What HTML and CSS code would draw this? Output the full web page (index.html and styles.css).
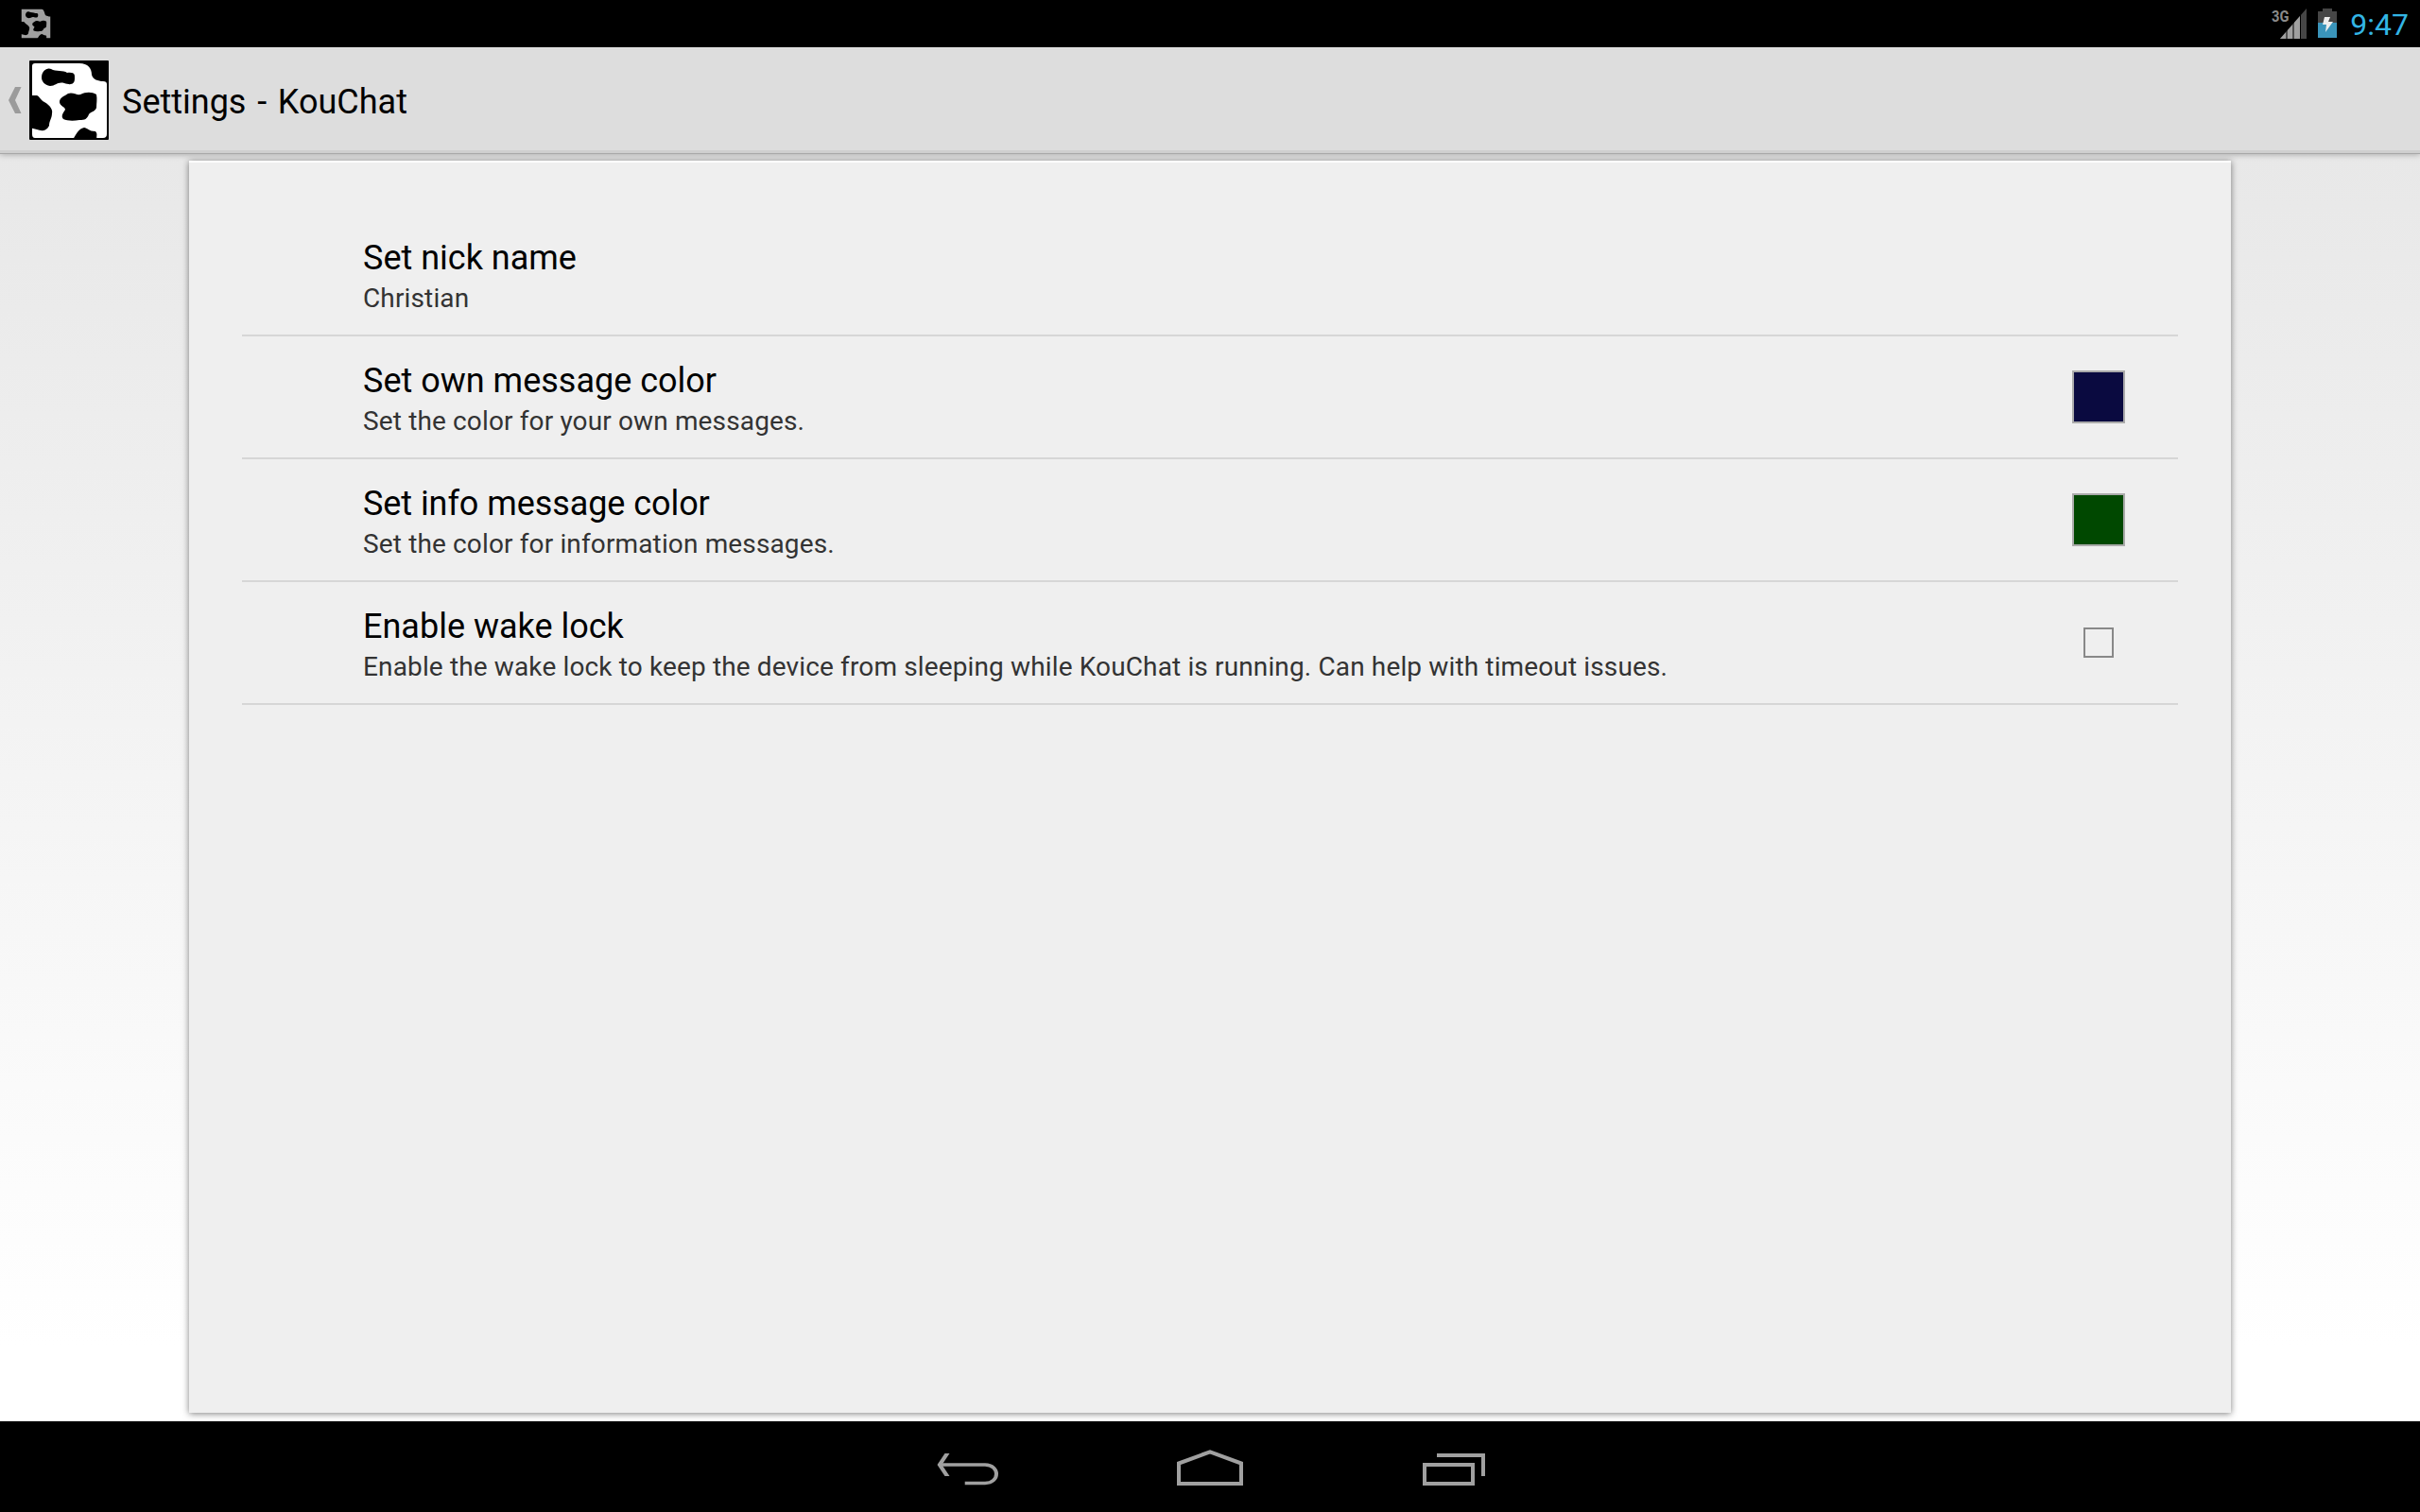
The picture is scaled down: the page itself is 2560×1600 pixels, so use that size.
FILE: index.html
```html
<!DOCTYPE html>
<html lang="en">
<head>
<meta charset="utf-8">
<title>Settings - KouChat</title>
<link rel="stylesheet" href="styles.css">
</head>
<body>
<div class="screen">
  <header class="status">
    <svg class="notice" viewBox="0 0 84 84"><rect x="2" y="2" width="80" height="80" fill="#a0a0a0"/><g fill="#000"><use href="#spots"/><path d="M58 0H84V22H78C68 21 67 17 66 12Q65 5 58 0Z"/></g></svg>
    <div class="tray">
      <span class="net">3G</span>
      <svg class="signal" width="30" height="34" viewBox="0 0 30 34"><path d="M0 32L28 0V32Z" fill="#464646"/><path d="M0 32L21 8V32Z" fill="#a0a0a0"/><path d="M7 22V34M14 14V34M21.5 6V34" stroke="#000"/></svg>
      <svg class="battery" width="20" height="32" viewBox="0 0 20 32"><path d="M0 3H5V0H15V3H20V31H0Z" fill="#464646"/><path d="M0 15H20V31H0Z" fill="#3a94ba"/><path d="M7 9H13L11 14H16L8 25L9 17H5Z" fill="#eee"/></svg>
      <span class="clock">9:47</span>
    </div>
  </header>
  <div class="bar">
    <svg class="up" width="14" height="28" viewBox="0 0 14 28"><path d="M7 0H13.5L7 14L13.5 28H7L0 14Z" fill="#9b9b9b"/></svg>
    <svg class="logo" width="84" height="84" viewBox="0 0 84 84">
      <rect width="84" height="84" rx="1"/>
      <path fill="#fff" d="M6 3H53C62 3 66 8 66 15C67 20 73 22 78 22Q82 22 82 25V78Q82 82 78 82H6Q3 82 3 78V6Q3 3 6 3Z"/>
      <g id="spots">
        <path d="M13 18C13 11 19 7 23 9C28 12 36 10 40 13C49 12 48 16 48 19C48 26 43 26 37 24C30 22 28 27 22 27C16 26 13 22 13 18Z"/>
        <path d="M0 37H8C11 38 12 42 16 44C23 48 25 53 24 56C24 61 21 64 21 69C18 75 13 75 8 73L0 71Z"/>
        <path d="M32 44C32 39 37 38 41 35C46 33 50 37 54 36C60 33 66 33 71 36C72 41 71 45 71 50C70 54 65 54 63 57C61 62 59 63 53 63C47 64 40 64 36 62C33 59 36 55 38 52C38 49 32 48 32 44Z"/>
        <path d="M46 84C49 79 52 72 58 71C61 71 63 75 70 75C73 78 70 81 72 84Z"/>
      </g>
    </svg>
    <h1 class="title">Settings - KouChat</h1>
  </div>
  <main class="content">
    <ul class="card">
      <li class="row"><div class="label"><h2 class="name">Set nick name</h2><p class="note">Christian</p></div></li>
      <li class="row"><div class="label"><h2 class="name">Set own message color</h2><p class="note">Set the color for your own messages.</p></div><span class="swatch navy"></span></li>
      <li class="row"><div class="label"><h2 class="name snug">Set info message color</h2><p class="note">Set the color for information messages.</p></div><span class="swatch green"></span></li>
      <li class="row"><div class="label"><h2 class="name">Enable wake lock</h2><p class="note">Enable the wake lock to keep the device from sleeping while KouChat is running. Can help with timeout issues.</p></div><span class="check"></span></li>
    </ul>
  </main>
  <nav class="nav">
    <svg viewBox="0 0 96 96"><path d="M30.5 34H25.5L17.5 46L25.5 58H30.5L22.5 46Z" fill="#a0a0a0" stroke="none"/><path d="M20 46H68C84 46 84 69.5 68 69.5H46.7" transform="matrix(1 0 0 .83 0 7.8)"/></svg>
    <svg viewBox="0 0 96 96"><path d="M15 66V44.5L48 32.3L81 44.5V66Z"/></svg>
    <svg viewBox="0 0 96 96"><path d="M17 46H68V66H17ZM30 36H79V58"/></svg>
  </nav>
</div>
</body>
</html>
```

FILE: styles.css
```css
* { box-sizing: border-box; margin: 0; padding: 0; }
body { font-family: Roboto, sans-serif; background: #000; }
.screen { width: 2560px; height: 1600px; display: flex; flex-direction: column; overflow: hidden; }
.status { height: 50px; background: #000; display: flex; justify-content: space-between; padding-left: 22px; }
.notice { width: 32px; height: 32px; margin-top: 9px; }
.tray { display: flex; align-items: flex-start; padding-right: 12px; }
.net { font: bold 17px/16px Roboto, sans-serif; color: #8a8a8a; margin-top: 9px; width: 9px; transform: scaleX(.86); transform-origin: 0 0; }
.signal { margin-top: 9px; }
.battery { margin: 9px 14px 0 10px; }
.clock { font-size: 32px; line-height: 52px; color: #33b5e5; }
.bar { height: 113px; background: linear-gradient(#e1e1e1 0, #ddd 2px, #ddd 109px, #cfcfcf 109px, #cfcfcf 112px, #a8a8a8 112px); display: flex; align-items: center; padding: 0 0 1px 9px; position: relative; z-index: 1; box-shadow: 0 1px 6px rgba(0,0,0,.25); }
.logo { margin: 0 14px 0 8px; }
.title { font-size: 36px; font-weight: 400; line-height: 42px; padding-top: 3px; word-spacing: 2.8px; }
.content { height: 1341px; padding: 7px 200px 9px; background: linear-gradient(#e8e8e8, #fff 94%); }
.card { height: 1325px; background: #efefef; border-top: 2px solid #fff; padding: 54px 56px 0; list-style: none; box-shadow: 0 1px 7px rgba(0,0,0,.5); }
.row { height: 130px; border-bottom: 2px solid #d6d6d6; display: flex; align-items: center; justify-content: space-between; padding: 0 56px 0 128px; }
.label { align-self: flex-start; padding-top: 26px; }
.name { font-size: 36px; font-weight: 400; line-height: 42px; color: #000; white-space: nowrap; }
.snug { letter-spacing: -.07px; }
.note { font-size: 28px; line-height: 38px; margin-top: 3px; color: #333; white-space: nowrap; letter-spacing: .137px; }
.swatch { width: 56px; height: 56px; border: 2px solid #aaa; }
.navy { background: #0a0a40; }
.green { background: #004800; }
.check { width: 32px; height: 32px; border: 2px solid #888; margin-right: 12px; }
.nav { height: 96px; background: #000; display: flex; justify-content: center; gap: 162px; }
.nav svg { width: 96px; height: 96px; fill: none; stroke: #a0a0a0; stroke-width: 4; }
```
